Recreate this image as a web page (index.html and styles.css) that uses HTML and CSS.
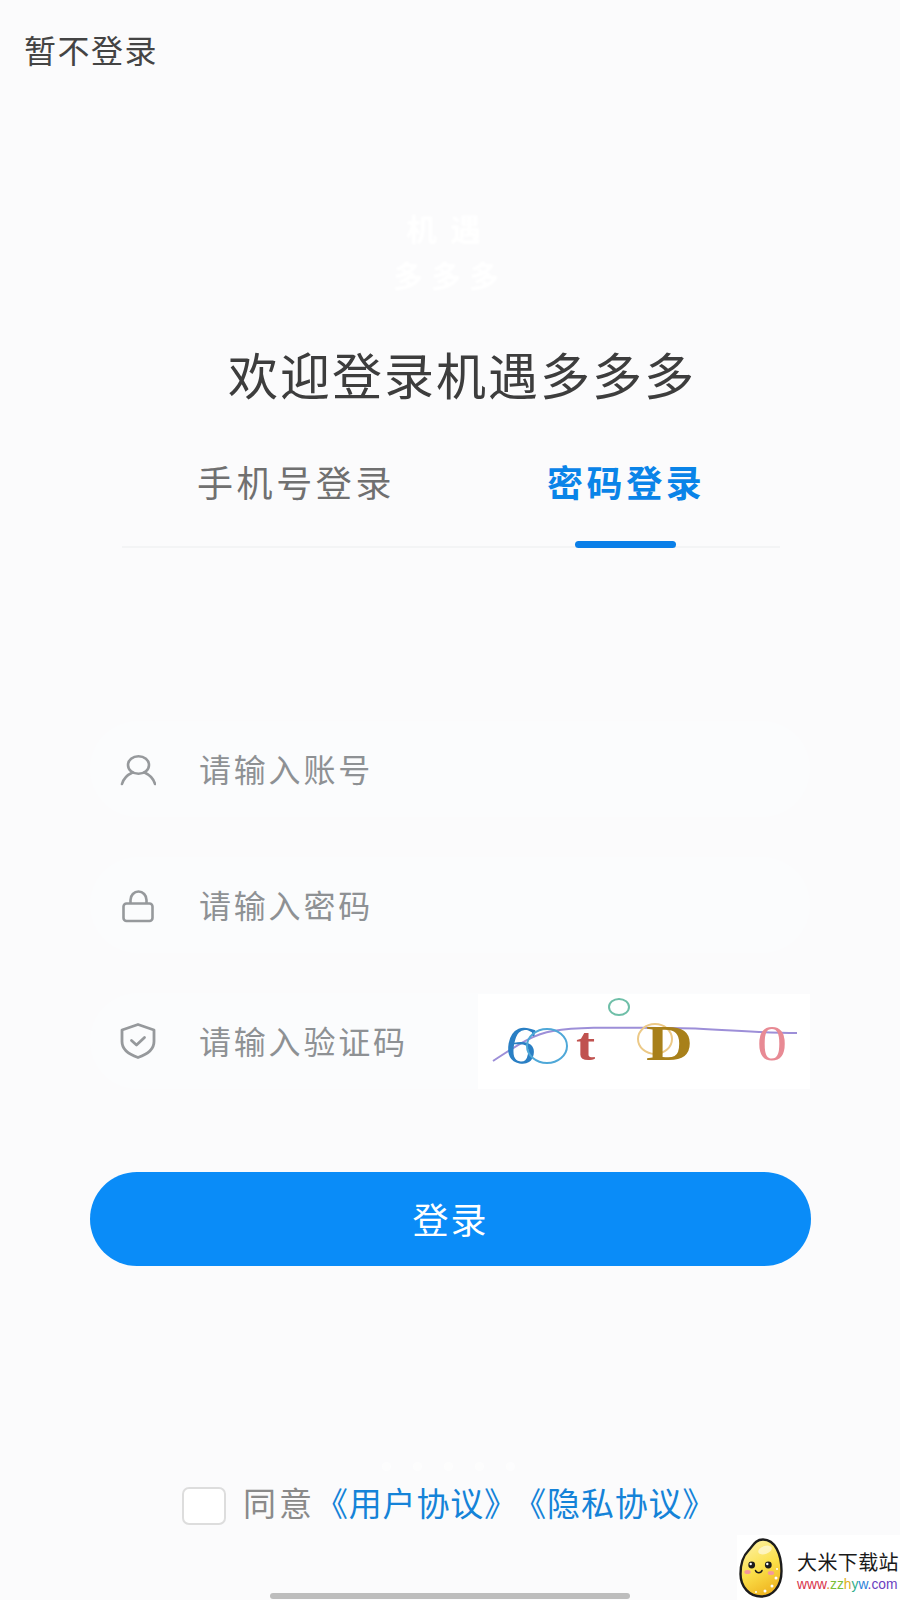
FILE: index.html
```html
<!DOCTYPE html>
<html lang="zh-CN">

<head>
    <meta charset="UTF-8">
    <meta name="viewport" content="width=device-width, initial-scale=1.0">
    <title>机遇多多多 - 登录</title>
    <link rel="stylesheet" href="styles.css">
</head>

<body>
    <div class="page">
        <div class="header">
            <a class="skip">暂不登录</a>
        </div>

        <div class="brand">
            <div class="brand-top">机遇</div>
            <div class="brand-bottom">多多多</div>
        </div>

        <h1 class="title">欢迎登录机遇多多多</h1>

        <div class="tabs">
            <div class="tab">手机号登录</div>
            <div class="tab active">密码登录</div>
        </div>

        <div class="form">
            <div class="field">
                <svg class="field-icon" viewBox="0 0 36 36" fill="none" stroke="#96999c" stroke-width="2.600" stroke-linecap="round">
                    <ellipse cx="18.500" cy="14" rx="10.500" ry="8.800"/>
                    <path d="M2 33c1.500-5.500 5-9 10.500-11.500M35 33c-1.500-5.500-5-9-10.500-11.500"/>
                </svg>
                <span class="placeholder">请输入账号</span>
            </div>
            <div class="field">
                <svg class="field-icon" viewBox="0 0 36 36" fill="none" stroke="#96999c" stroke-width="2.600" stroke-linejoin="round">
                    <rect x="3.500" y="16.500" width="29" height="17.500" rx="3"/>
                    <path d="M10.500 16.500V13a8 8.500 0 0 1 16 0v3.500"/>
                </svg>
                <span class="placeholder">请输入密码</span>
            </div>
            <div class="field">
                <svg class="field-icon" viewBox="0 0 36 36" fill="none" stroke="#96999c" stroke-width="2.800" stroke-linecap="round" stroke-linejoin="round">
                    <path d="M18 1.500 34 7v11.500c0 7.500-7 13-16 16-9-3-16-8.500-16-16V7z"/>
                    <path d="M11.500 17.500l5 4.500 8-7.500"/>
                </svg>
                <span class="placeholder">请输入验证码</span>
                <svg class="captcha" viewBox="0 0 332 95">
                    <path d="M15 67C38 52 55 40 75 37c30-5 75-3 117-3 40 0 85 5 127 5" fill="none" stroke="#9d8fd8" stroke-width="2"/>
                    <ellipse cx="141" cy="13" rx="10" ry="8" fill="none" stroke="#6fbfa8" stroke-width="2"/>
                    <text class="captcha-char" transform="translate(25 66) rotate(10) scale(1.15 1)" font-size="54" fill="#2a7fc4">6</text>
                    <ellipse cx="69" cy="52" rx="20" ry="17" fill="none" stroke="#4fa8d8" stroke-width="2"/>
                    <text class="captcha-char" transform="translate(98 66) scale(1.25 1)" font-size="46" font-weight="700" fill="#c0524f">t</text>
                    <ellipse cx="177" cy="45" rx="17" ry="15" fill="none" stroke="#ecc987" stroke-width="2"/>
                    <text class="captcha-char" transform="translate(168 66) scale(1.3 1)" font-size="50" font-weight="700" fill="#a8801a">D</text>
                    <text class="captcha-char" transform="translate(279 66) scale(1.2 1)" font-size="50" fill="#e88a94">0</text>
                </svg>
            </div>
        </div>

        <button class="login-btn">登录</button>

        <div class="agree">
            <span class="checkbox"></span>
            <span class="agree-text">同意<a>《用户协议》</a><a class="second">《隐私协议》</a></span>
        </div>

        <div class="ghost-dots"><i></i><i></i><i></i><i></i><i></i></div>

        <div class="home-bar"></div>

        <div class="watermark">
            <svg class="egg" viewBox="0 0 44 60">
                <defs>
                    <linearGradient id="eggFill" x1="0.3" y1="0" x2="0.7" y2="1">
                        <stop offset="0" stop-color="#fdf0a0"/>
                        <stop offset="0.5" stop-color="#fbe04a"/>
                        <stop offset="1" stop-color="#eeb01c"/>
                    </linearGradient>
                </defs>
                <path d="M24 1.500C16 1.500 14 8 9.500 12.500 3.500 18.500 1.500 27 1.500 36c0 13 9 22.500 20.500 22.500S42.500 49 42.500 33C42.500 16 36 1.500 24 1.500z" fill="url(#eggFill)" stroke="#1c1c1c" stroke-width="2.400"/>
                <ellipse cx="26" cy="12" rx="7" ry="4" fill="#fff" opacity="0.55" transform="rotate(-20 26 12)"/>
                <circle cx="12.700" cy="27" r="3.400" fill="#1c1c1c"/>
                <circle cx="29.300" cy="27" r="3.400" fill="#1c1c1c"/>
                <circle cx="11.700" cy="26" r="1.200" fill="#fff"/>
                <circle cx="28.300" cy="26" r="1.200" fill="#fff"/>
                <ellipse cx="8.500" cy="34" rx="3.200" ry="2" fill="#f59a9a"/>
                <ellipse cx="32" cy="35" rx="3.200" ry="2" fill="#f59a9a"/>
                <path d="M16.500 32.500c1 3 5.500 3 6.500 0" fill="none" stroke="#1c1c1c" stroke-width="1.500" stroke-linecap="round"/>
                <circle cx="37" cy="40" r="1.500" fill="#fff"/>
                <circle cx="33" cy="48" r="1.500" fill="#fff"/>
                <circle cx="26" cy="53" r="1.500" fill="#fff"/>
                <circle cx="38" cy="31" r="1" fill="#fff"/>
                <circle cx="17" cy="54" r="1" fill="#fff"/>
            </svg>
            <div class="watermark-text">
                <div class="watermark-name">大米下载站</div>
                <div class="watermark-url"><span class="c1">www</span><span class="c2">.</span><span class="c3">zz</span><span class="c4">h</span><span class="c5">y</span><span class="c6">w</span><span class="c7">.com</span></div>
            </div>
        </div>
    </div>
</body>

</html>
```

FILE: styles.css
```css
* {
    box-sizing: border-box;
}

body {
    margin: 0;
    font-family: "Noto Sans CJK SC", "Noto Sans", sans-serif;
    background-color: #fbfbfc;
}

.page {
    position: relative;
    width: 900px;
    height: 1600px;
    overflow: hidden;
}

.header {
    height: 102px;
    padding: 29px 0 0 24px;
}

.skip {
    display: block;
    font-size: 32px;
    line-height: 40px;
    letter-spacing: 1.500px;
    color: #444;
}

.brand {
    height: 243px;
    padding-top: 103px;
    text-align: center;
    color: #fff;
    font-weight: 700;
    filter: blur(1.2px);
}

.brand-top {
    font-size: 31px;
    line-height: 46px;
    letter-spacing: 13px;
}

.brand-bottom {
    margin-top: 1px;
    font-size: 30px;
    line-height: 44px;
    letter-spacing: 8px;
}

.title {
    margin: 0;
    height: 100px;
    padding: 0 0 0 24px;
    font-size: 50px;
    line-height: 56px;
    font-weight: 400;
    letter-spacing: 2px;
    text-align: center;
    color: #3d3d3d;
}

.tabs {
    display: flex;
    gap: 152px;
    width: 658px;
    height: 103px;
    margin-left: 122px;
    padding: 13px 0 0 75px;
    border-bottom: 2px solid #f3f4f5;
}

.tab {
    position: relative;
    height: 88px;
    font-size: 36px;
    line-height: 46px;
    letter-spacing: 3.600px;
    color: #707070;
}

.tab.active {
    font-weight: 700;
    color: #0a84e8;
}

.tab.active::after {
    content: "";
    position: absolute;
    left: 28px;
    bottom: -2px;
    width: 101px;
    height: 7px;
    border-radius: 4px;
    background-color: #0a7fe8;
}

.form {
    display: flex;
    flex-direction: column;
    gap: 40px;
    margin-top: 173px;
    padding: 0 90px;
}

.field {
    display: flex;
    align-items: center;
    height: 96px;
    padding-left: 30px;
    border-radius: 48px;
    background-color: #fbfcfd;
}

.field-icon {
    flex: none;
    width: 36px;
    height: 36px;
    margin-right: 43px;
}

.placeholder {
    margin-bottom: 2px;
    font-size: 32px;
    letter-spacing: 2.800px;
    color: #8e9194;
}

.captcha {
    flex: none;
    width: 332px;
    height: 95px;
    margin-left: auto;
    background-color: #fff;
    filter: blur(0.7px);
}

.captcha-char {
    font-family: "Liberation Serif", serif;
}

.login-btn {
    display: block;
    width: 721px;
    height: 94px;
    margin: 83px 0 0 90px;
    padding-bottom: 4px;
    border: none;
    border-radius: 47px;
    background-color: #0a8cf8;
    color: #fff;
    font-family: inherit;
    font-size: 36px;
    letter-spacing: 2px;
}

.agree {
    display: flex;
    align-items: flex-start;
    gap: 17px;
    height: 38px;
    margin-top: 221px;
    padding-left: 182px;
}

.checkbox {
    flex: none;
    width: 44px;
    height: 38px;
    border: 2px solid #ddd;
    border-radius: 7px;
    background-color: #fff;
}

.agree-text {
    margin-top: -4px;
    font-size: 33px;
    line-height: 38px;
    letter-spacing: 3px;
    color: #8a8a8a;
    white-space: nowrap;
}

.agree-text a {
    letter-spacing: 0.800px;
    color: #1583d8;
}

.agree-text .second {
    margin-left: 12px;
}

.ghost-dots {
    position: absolute;
    left: 382px;
    top: 1462px;
    display: flex;
    gap: 22px;
    opacity: 0.6;
}

.ghost-dots i {
    width: 9px;
    height: 9px;
    border-radius: 50%;
    background-color: #fff;
}

.home-bar {
    position: absolute;
    left: 270px;
    bottom: 1px;
    width: 360px;
    height: 6px;
    border-radius: 3px;
    background-color: #bdbdbd;
}

.watermark {
    position: absolute;
    right: 0;
    bottom: 0;
    display: flex;
    gap: 14px;
    width: 163px;
    height: 65px;
    padding: 3px 0 0 2px;
    background-color: #fff;
}

.egg {
    flex: none;
    width: 44px;
    height: 60px;
}

.watermark-text {
    flex: none;
    width: 103px;
    padding-top: 10px;
}

.watermark-name {
    font-size: 20px;
    line-height: 27px;
    letter-spacing: 0.400px;
    white-space: nowrap;
    color: #1a1a1a;
}

.watermark-url {
    margin-top: 2px;
    font-family: "Liberation Sans", sans-serif;
    font-size: 13.800px;
    line-height: 16px;
    white-space: nowrap;
}

.c1 { color: #d8324a; }
.c2 { color: #e08a2c; }
.c3 { color: #7bbf3a; }
.c4 { color: #e0b020; }
.c5 { color: #2fae8a; }
.c6 { color: #2c7fd8; }
.c7 { color: #6a3fc0; }
```
